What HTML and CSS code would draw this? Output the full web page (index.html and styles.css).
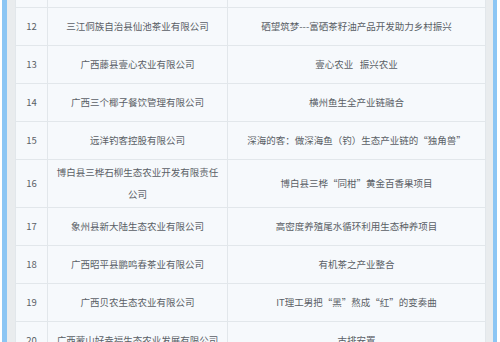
FILE: index.html
```html
<!DOCTYPE html>
<html lang="zh-CN">
<head>
<meta charset="utf-8">
<link rel="stylesheet" href="styles.css">
</head>
<body>
<div class="frame">
  <table class="list">
    <colgroup><col class="c-no"><col class="c-co"><col class="c-pr"></colgroup>
    <tr class="r-top"><td></td><td></td><td></td></tr>
    <tr><td>12</td><td>三江侗族自治县仙池茶业有限公司</td><td>硒望筑梦---富硒茶籽油产品开发助力乡村振兴</td></tr>
    <tr><td>13</td><td>广西藤县壹心农业有限公司</td><td>壹心农业&nbsp;&nbsp;&nbsp;振兴农业</td></tr>
    <tr><td>14</td><td>广西三个椰子餐饮管理有限公司</td><td>横州鱼生全产业链融合</td></tr>
    <tr><td>15</td><td>远洋钓客控股有限公司</td><td>深海的客：做深海鱼（钓）生态产业链的“独角兽”</td></tr>
    <tr class="r-two"><td>16</td><td>博白县三桦石柳生态农业开发有限责任公司</td><td>博白县三桦“同柑”黄金百香果项目</td></tr>
    <tr><td>17</td><td>象州县新大陆生态农业有限公司</td><td>高密度养殖尾水循环利用生态种养项目</td></tr>
    <tr><td>18</td><td>广西昭平县鹏鸣春茶业有限公司</td><td>有机茶之产业整合</td></tr>
    <tr><td>19</td><td>广西贝农生态农业有限公司</td><td>IT理工男把“黑”熬成“红”的变奏曲</td></tr>
    <tr><td>20</td><td>广西蒙山好幸福生态农业发展有限公司</td><td>古排安置</td></tr>
  </table>
</div>
</body>
</html>
```
FILE: styles.css
```css
html, body {
  margin: 0;
  padding: 0;
  background: #ffffff;
  overflow: hidden;
}
.frame {
  margin: 0 3px 0 2px;
  border-left: 5px solid #8cc6f4;
  border-right: 4px solid #8cc6f4;
  background: #e9ecee;
  padding: 0 8px;
  height: 342px;
  overflow: hidden;
}
.list {
  width: 470px;
  border-collapse: collapse;
  table-layout: fixed;
  background: #f6f9fc;
  font-family: "Noto Sans CJK SC", "Noto Sans", sans-serif;
  font-size: 9.5px;
  color: #5a5f66;
}
.c-no { width: 32px; }
.c-co { width: 180px; }
.c-pr { width: 258px; }
.list td {
  border: 1px solid #e2e7eb;
  height: 38px;
  padding: 0 6px;
  line-height: 22px;
  text-align: center;
  vertical-align: middle;
  box-sizing: border-box;
  word-break: break-all;
}
.list tr:first-child td { border-top: none; }
.list .r-top td { height: 7px; padding: 0; }
.list .r-two td { height: 48px; }
```
